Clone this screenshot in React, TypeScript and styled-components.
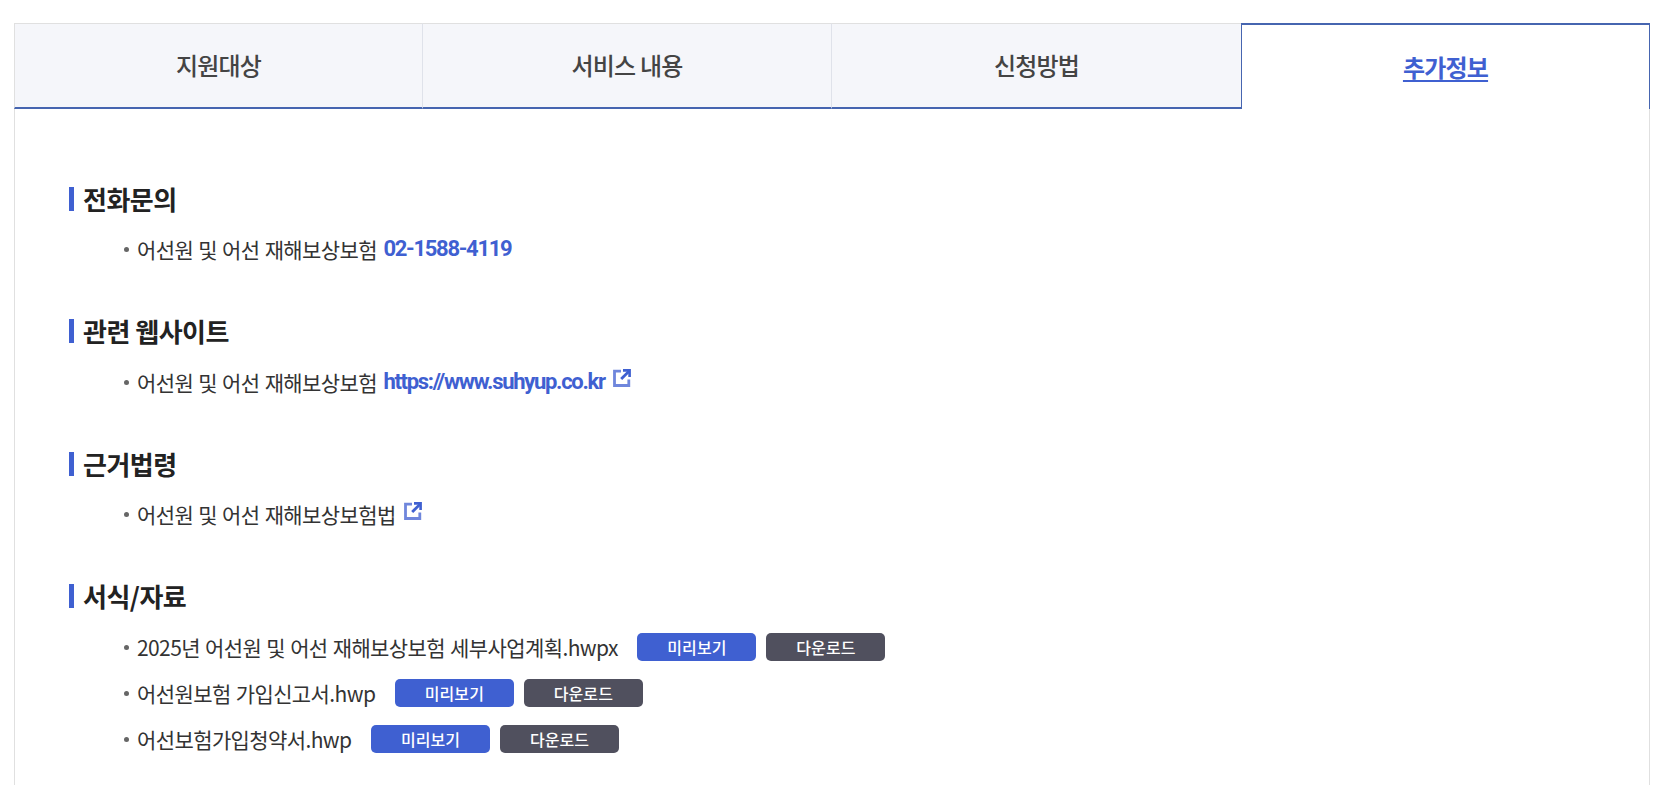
import React from "react";
import styled, { createGlobalStyle } from "styled-components";

const Global = createGlobalStyle`
  html, body { margin: 0; padding: 0; background: #fff; }
  body { font-family: "Noto Sans CJK KR", "Roboto", sans-serif; color: #222; height: 785px; overflow: hidden; }
`;
const Page = styled.div`
  padding: 23px 15px 0 14px;
`;
const Tabs = styled.div`
  display: grid;
  grid-template-columns: 408px 409px 410px 1fr;
  height: 86px;
`;
const Tab = styled.a<{ $active?: boolean; $first?: boolean }>`
  display: flex;
  align-items: center;
  justify-content: center;
  box-sizing: border-box;
  font-size: 24px;
  letter-spacing: -0.8px;
  padding-bottom: 2px;
  color: ${(p) => (p.$active ? "#3f60d1" : "#444")};
  font-weight: ${(p) => (p.$active ? 700 : 500)};
  text-decoration: ${(p) => (p.$active ? "underline" : "none")};
  text-underline-offset: 3px;
  background: ${(p) => (p.$active ? "#fff" : "#f5f6fa")};
  border-top: ${(p) => (p.$active ? "2px solid #4665b0" : "1px solid #e0e0e0")};
  border-left: ${(p) => (p.$active ? "1px solid #4665b0" : p.$first ? "1px solid #e0e0e0" : "1px solid #dfe2ea")};
  border-right: ${(p) => (p.$active ? "1px solid #4665b0" : "0")};
  border-bottom: ${(p) => (p.$active ? "0" : "2px solid #4665b0")};
`;
const Panel = styled.div`
  border-left: 1px solid #e0e0e0;
  border-right: 1px solid #e0e0e0;
  padding: 73.5px 0 40px 54px;
  height: 700px;
  box-sizing: border-box;
`;
const Section = styled.section`
  margin-bottom: 49px;
`;
const Heading = styled.h3`
  margin: 0 0 17.5px;
  display: flex;
  align-items: center;
  gap: 9px;
  font-size: 26px;
  line-height: 32px;
  font-weight: 700;
  letter-spacing: -0.5px;
  color: #222;
  &::before {
    content: "";
    width: 5px;
    height: 24px;
    background: #3f60d1;
  }
`;
const List = styled.ul`
  list-style: none;
  margin: 0;
  padding: 0 0 0 54px;
  display: flex;
  flex-direction: column;
  gap: 12px;
`;
const Item = styled.li`
  position: relative;
  display: flex;
  align-items: center;
  padding-left: 14px;
  font-size: 21px;
  line-height: 34px;
  font-weight: 400;
  letter-spacing: -0.6px;
  word-spacing: 1px;
  color: #333;
  &::before {
    content: "";
    position: absolute;
    left: 1px;
    top: 15px;
    width: 5px;
    height: 5px;
    border-radius: 50%;
    background: #666;
  }
`;
const Strong = styled.a`
  margin-left: 6.5px;
  font-family: "Roboto", "Noto Sans CJK KR", sans-serif;
  font-weight: 700;
  color: #3f60d1;
  font-size: 22px;
  letter-spacing: -1.3px;
`;
const Ext = styled.svg`
  width: 18px;
  height: 18px;
  margin-left: 8px;
  margin-top: -7px;
  flex: none;
`;
const Actions = styled.div`
  display: flex;
  gap: 10px;
  margin-left: 19.5px;
`;
const Btn = styled.a<{ $dark?: boolean }>`
  width: 119px;
  height: 28px;
  border-radius: 5px;
  display: flex;
  align-items: center;
  justify-content: center;
  box-sizing: border-box;
  color: #fff;
  font-size: 16px;
  font-weight: 500;
  letter-spacing: 0.1px;
  word-spacing: 0;
  background: ${(p) => (p.$dark ? "#50505e" : "#3f60d1")};
`;
const ExtIcon = () => (
  <Ext viewBox="0 0 18 18" fill="none">
    <path d="M8 2.2H1.5v14.3h14.3V10.5" stroke="#6f86dc" strokeWidth="2.8" />
    <path d="M10 1.4H16.6V8" stroke="#3f60d1" strokeWidth="2.6" />
    <path d="M16 2.2L8.2 10" stroke="#3f60d1" strokeWidth="2.8" />
  </Ext>
);
const Files = ({ name }: { name: string }) => (
  <Item>
    {name}
    <Actions>
      <Btn>미리보기</Btn>
      <Btn $dark>다운로드</Btn>
    </Actions>
  </Item>
);
export default function App() {
  return (
    <Page>
      <Global />
      <Tabs>
        <Tab $first>지원대상</Tab>
        <Tab>서비스 내용</Tab>
        <Tab>신청방법</Tab>
        <Tab $active>추가정보</Tab>
      </Tabs>
      <Panel>
        <Section>
          <Heading>전화문의</Heading>
          <List>
            <Item>어선원 및 어선 재해보상보험<Strong>02-1588-4119</Strong></Item>
          </List>
        </Section>
        <Section>
          <Heading>관련 웹사이트</Heading>
          <List>
            <Item>어선원 및 어선 재해보상보험<Strong>https://www.suhyup.co.kr</Strong><ExtIcon /></Item>
          </List>
        </Section>
        <Section>
          <Heading>근거법령</Heading>
          <List>
            <Item>어선원 및 어선 재해보상보험법<ExtIcon /></Item>
          </List>
        </Section>
        <Section>
          <Heading>서식/자료</Heading>
          <List>
            <Files name="2025년 어선원 및 어선 재해보상보험 세부사업계획.hwpx" />
            <Files name="어선원보험 가입신고서.hwp" />
            <Files name="어선보험가입청약서.hwp" />
          </List>
        </Section>
      </Panel>
    </Page>
  );
}
